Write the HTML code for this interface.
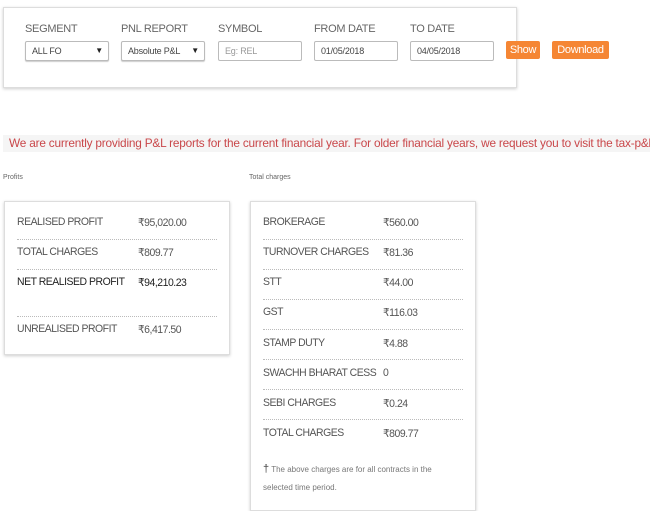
<!DOCTYPE html>
<html><head><meta charset="utf-8"><style>
*{margin:0;padding:0;box-sizing:border-box}
body{width:650px;height:500px;overflow:hidden;background:#fff;font-family:"Liberation Sans",sans-serif;color:#555;position:relative}
.a{position:absolute;white-space:nowrap}
.lbl{font-size:11px;color:#666;top:23px;letter-spacing:-0.3px}
.inp{top:41px;height:20px;border:1px solid #bbb;border-radius:2px;font-size:9px;line-height:18px;padding-left:6px;color:#444;background:#fff;letter-spacing:-0.2px}
.sel{box-shadow:0 1px 1px #ccc}
.arr{position:absolute;right:5px;top:0;font-size:8px;color:#222}
.btn{top:41px;height:18px;background:#f58634;color:#fff;font-size:11px;line-height:18px;text-align:center;border-radius:2px;letter-spacing:-0.3px}
.box{border:1px solid #ddd;box-shadow:0 1px 3px rgba(0,0,0,.2);background:#fff}
.t,.v{font-size:11px;color:#555;letter-spacing:-0.5px;transform:scaleX(0.95);transform-origin:left}
.ln{height:0;border-top:1px dotted #bbb}
</style></head><body>
<div class="a box" style="left:3px;top:7px;width:514px;height:81px"></div>
<div class="a lbl" style="left:25px">SEGMENT</div>
<div class="a lbl" style="left:121px">PNL REPORT</div>
<div class="a lbl" style="left:218px">SYMBOL</div>
<div class="a lbl" style="left:314px">FROM DATE</div>
<div class="a lbl" style="left:410px">TO DATE</div>
<div class="a inp sel" style="left:25px;width:84px">ALL FO<span class="arr">▼</span></div>
<div class="a inp sel" style="left:121px;width:84px">Absolute P&amp;L<span class="arr">▼</span></div>
<div class="a inp" style="left:218px;width:84px;color:#999">Eg: REL</div>
<div class="a inp" style="left:314px;width:84px">01/05/2018</div>
<div class="a inp" style="left:410px;width:84px">04/05/2018</div>
<div class="a btn" style="left:506px;width:34px">Show</div>
<div class="a btn" style="left:552px;width:57px">Download</div>
<div class="a" style="left:3px;top:135px;width:647px;height:17px;background:#f5f5f5"></div>
<div class="a" style="left:9px;top:136px;font-size:12px;color:#c9474a;letter-spacing:-0.2px;transform:scaleX(0.985);transform-origin:left">We are currently providing P&amp;L reports for the current financial year. For older financial years, we request you to visit the tax-p&amp;l</div>
<div class="a" style="left:3px;top:174px;font-size:7px;color:#666">Profits</div>
<div class="a" style="left:249px;top:174px;font-size:7px;color:#666">Total charges</div>

<div class="a box" style="left:4px;top:201px;width:226px;height:154px"></div>
<div class="a t" style="left:17px;top:216px">REALISED PROFIT</div><div class="a v" style="left:138px;top:216px">₹95,020.00</div>
<div class="a ln" style="left:17px;top:239px;width:200px"></div>
<div class="a t" style="left:17px;top:246px">TOTAL CHARGES</div><div class="a v" style="left:138px;top:246px">₹809.77</div>
<div class="a ln" style="left:17px;top:269px;width:200px"></div>
<div class="a t" style="left:17px;top:276px;color:#222">NET REALISED PROFIT</div><div class="a v" style="left:138px;top:276px;color:#222">₹94,210.23</div>
<div class="a ln" style="left:17px;top:316px;width:200px"></div>
<div class="a t" style="left:17px;top:323px">UNREALISED PROFIT</div><div class="a v" style="left:138px;top:323px">₹6,417.50</div>

<div class="a box" style="left:250px;top:201px;width:226px;height:310px"></div>
<div class="a t" style="left:263px;top:216px">BROKERAGE</div><div class="a v" style="left:383px;top:216px">₹560.00</div>
<div class="a ln" style="left:263px;top:239px;width:200px"></div>
<div class="a t" style="left:263px;top:246px">TURNOVER CHARGES</div><div class="a v" style="left:383px;top:246px">₹81.36</div>
<div class="a ln" style="left:263px;top:269px;width:200px"></div>
<div class="a t" style="left:263px;top:276px">STT</div><div class="a v" style="left:383px;top:276px">₹44.00</div>
<div class="a ln" style="left:263px;top:299px;width:200px"></div>
<div class="a t" style="left:263px;top:306px">GST</div><div class="a v" style="left:383px;top:306px">₹116.03</div>
<div class="a ln" style="left:263px;top:329px;width:200px"></div>
<div class="a t" style="left:263px;top:337px">STAMP DUTY</div><div class="a v" style="left:383px;top:337px">₹4.88</div>
<div class="a ln" style="left:263px;top:359px;width:200px"></div>
<div class="a t" style="left:263px;top:367px">SWACHH BHARAT CESS</div><div class="a v" style="left:383px;top:367px">0</div>
<div class="a ln" style="left:263px;top:389px;width:200px"></div>
<div class="a t" style="left:263px;top:397px">SEBI CHARGES</div><div class="a v" style="left:383px;top:397px">₹0.24</div>
<div class="a ln" style="left:263px;top:419px;width:200px"></div>
<div class="a t" style="left:263px;top:427px">TOTAL CHARGES</div><div class="a v" style="left:383px;top:427px">₹809.77</div>
<div class="a" style="left:263px;top:463px;font-size:8px;color:#777"><span style="font-size:11px;color:#444">†</span> The above charges are for all contracts in the</div>
<div class="a" style="left:263px;top:483px;font-size:8px;color:#777">selected time period.</div>
</body></html>
